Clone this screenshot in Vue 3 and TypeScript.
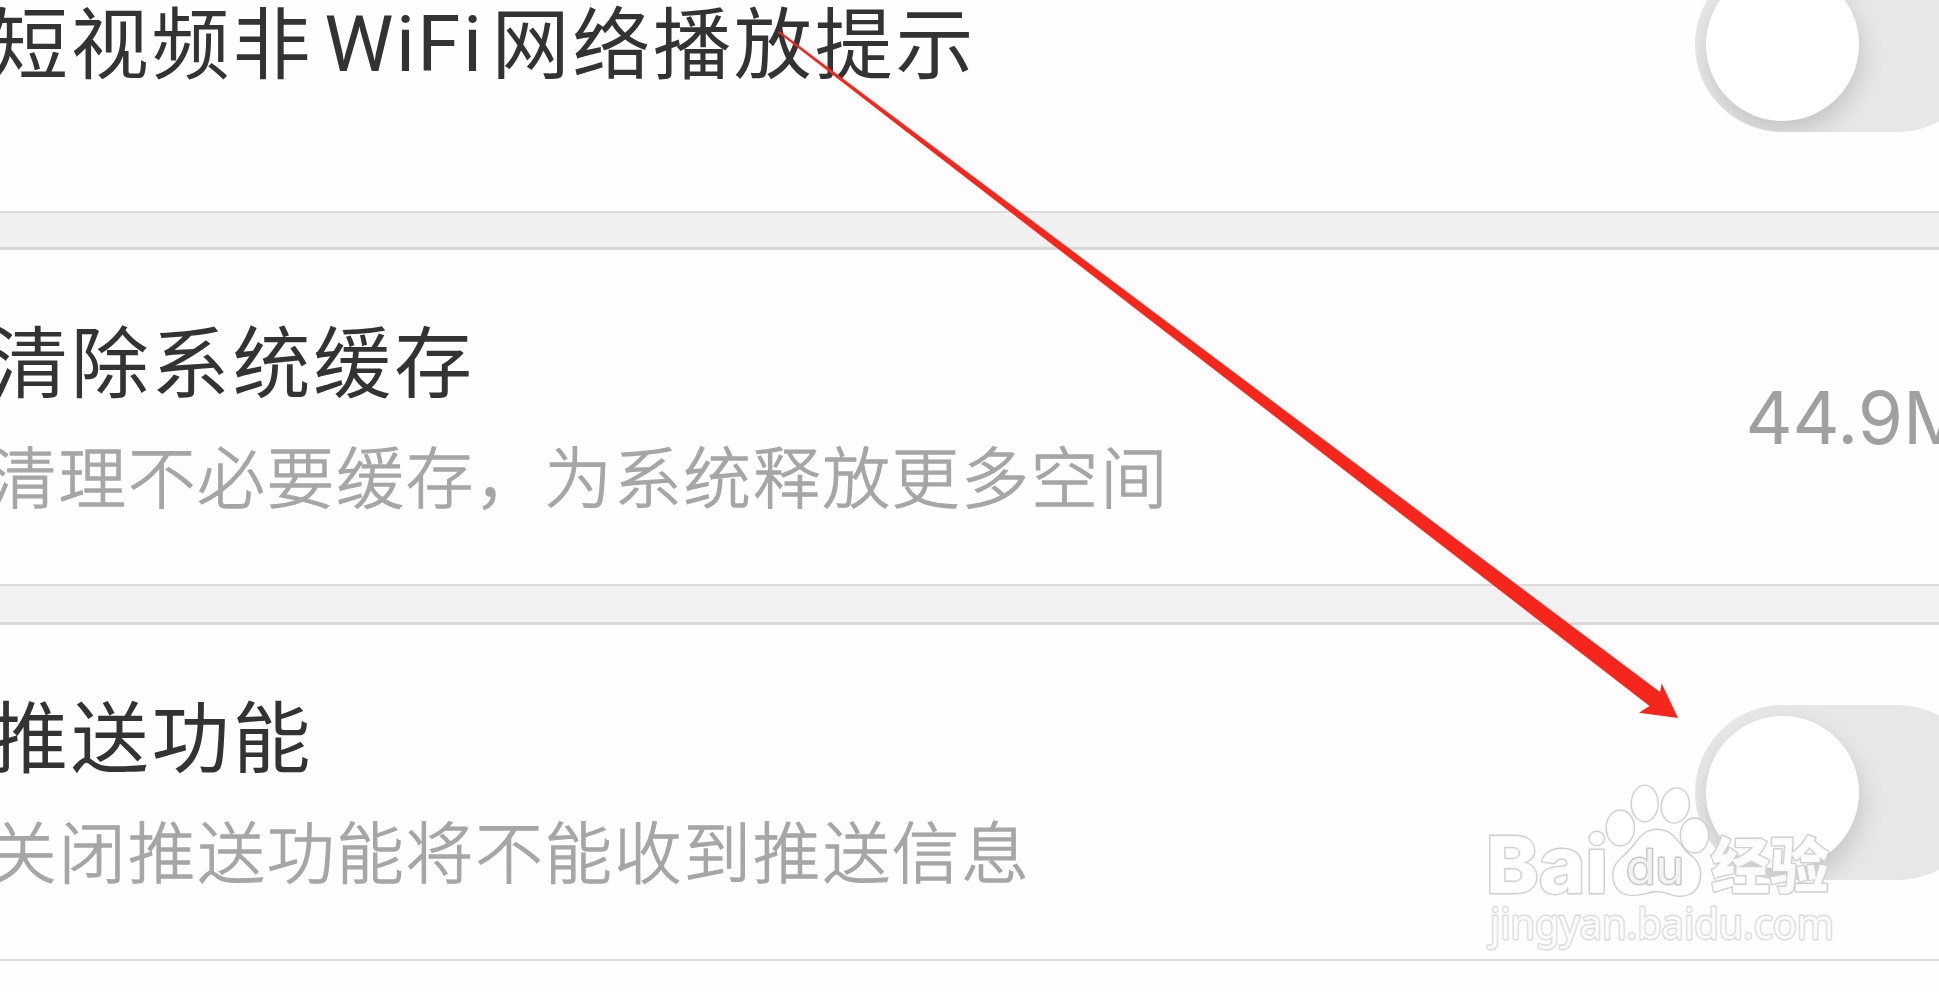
<script setup lang="ts">
interface SettingRow {
  id: string
  title: string[]
  subtitle?: string
  value?: string
  toggle?: boolean
}

const rows: SettingRow[] = [
  { id: 'wifi', title: ['短视频非', 'WiFi', '网络播放提示'], toggle: true },
  { id: 'cache', title: ['清除系统缓存'], subtitle: '清理不必要缓存，为系统释放更多空间', value: '44.9M' },
  { id: 'push', title: ['推送功能'], subtitle: '关闭推送功能将不能收到推送信息', toggle: true },
]
</script>

<template>
  <main class="screen">
    <section v-for="row in rows" :key="row.id" class="row" :class="row.id">
      <div class="copy">
        <h2 class="title">
          <span v-for="(part, i) in row.title" :key="i" :class="{ latin: i === 1 }">{{ part }}</span>
        </h2>
        <p v-if="row.subtitle" class="subtitle">{{ row.subtitle }}</p>
      </div>
      <span v-if="row.value" class="value">{{ row.value }}</span>
      <div v-if="row.toggle" class="toggle" role="switch" aria-checked="false">
        <div class="knob"></div>
      </div>
    </section>

    <svg class="overlay" width="1939" height="992" viewBox="0 0 1939 992">
      <path class="arrow" d="M778 32.5 L779.5 31 L1660 692 L1661.7 683.5 L1678 718 L1639 712.8 L1649.5 706 Z" />
      <g class="mark">
        <text class="bai" x="1486" y="893" textLength="122" lengthAdjust="spacingAndGlyphs">Bai</text>
        <ellipse cx="1620.3" cy="828" rx="13.5" ry="17.3" />
        <ellipse cx="1644.7" cy="803.5" rx="12.8" ry="17.7" />
        <ellipse cx="1675.3" cy="805.5" rx="13.3" ry="17" transform="rotate(12 1675.3 805.5)" />
        <ellipse cx="1694.5" cy="835.5" rx="13.5" ry="16.8" />
        <path d="M1657 830 C1676 830 1678 847 1692 857 C1705 868 1701 889 1689 894 C1675 899 1669 891 1657 891 C1646 891 1640 897 1626 894 C1611 889 1609 868 1622 858 C1637 847 1639 830 1657 830 Z" />
        <text class="du" x="1626" y="884" textLength="58" lengthAdjust="spacingAndGlyphs">du</text>
        <text class="cjk" x="1711" y="888" textLength="118" lengthAdjust="spacingAndGlyphs">经验</text>
        <text class="site" x="1490" y="939" textLength="344" lengthAdjust="spacingAndGlyphs">jingyan.baidu.com</text>
      </g>
    </svg>
  </main>
</template>

<style>
body {
  margin: 0;
  overflow: hidden;
  background: #fefefe;
}
</style>

<style scoped>
.screen {
  position: relative;
  width: 1939px;
  height: 992px;
  overflow: hidden;
  background: #fefefe;
  font-family: "Noto Sans CJK SC", sans-serif;
}

.row {
  display: flex;
  box-sizing: border-box;
  justify-content: space-between;
  white-space: nowrap;
  border-bottom: 2px solid #dcdcdc;
}

.wifi {
  height: 213px;
}

.cache,
.push {
  height: 339px;
  border-top: 3px solid #d8d8d8;
}

.cache {
  margin-top: 34px;
  box-shadow: 0 -34px #f0f0f0, 0 36px #f1f1f1;
}

.push {
  margin-top: 36px;
}

.copy {
  display: flex;
  flex-direction: column;
}

.title,
.subtitle {
  margin: 0;
  font-weight: 400;
}

.title {
  display: flex;
  margin-left: -10px;
  font-size: 78px;
  line-height: 100px;
  letter-spacing: 2.8px;
  color: #333;
}

.wifi .title {
  margin-top: -11px;
}

.cache .title,
.push .title {
  margin-top: 58px;
}

.latin {
  margin: 0 7px 0 11px;
  padding-top: 6px;
  font-family: Roboto, sans-serif;
  letter-spacing: 2.5px;
}

.subtitle {
  margin-top: 22px;
  margin-left: -11px;
  font-size: 67.5px;
  font-weight: 300;
  line-height: 88px;
  letter-spacing: 1.95px;
  color: #a6a6a6;
  -webkit-text-stroke: 1.3px #a6a6a6;
}

.value {
  margin-top: 123px;
  margin-right: -30px;
  font-family: Inter, sans-serif;
  font-size: 73px;
  line-height: 90px;
  color: #a0a0a0;
}

.toggle {
  flex: none;
  box-sizing: border-box;
  width: 290px;
  height: 175px;
  margin-right: -45.5px;
  padding: 11px;
  overflow: hidden;
  border-radius: 88px;
  background: #e7e7e7;
}

.wifi .toggle {
  margin-top: -43px;
}

.push .toggle {
  margin-top: 80px;
}

.knob {
  width: 153px;
  height: 153px;
  border-radius: 50%;
  background: #fff;
  box-shadow: 2px 12px 24px rgba(0, 0, 0, 0.15);
}

.overlay {
  position: absolute;
  inset: 0;
}

.arrow {
  fill: #f5261b;
}

.mark {
  fill: rgba(255, 255, 255, 0.88);
  stroke: #d0d0d0;
  stroke-width: 2.8;
  stroke-linejoin: round;
  paint-order: stroke;
}

.bai {
  font: 800 79px Inter, sans-serif;
}

.du {
  font: 400 48px Inter, sans-serif;
  fill: #f3f3f3;
  stroke: #c8c8c8;
  stroke-width: 3;
}

.cjk {
  font: 900 60px "Noto Sans CJK SC", sans-serif;
}

.site {
  font: 400 41px "Noto Sans", sans-serif;
  stroke: #dcdcdc;
}
</style>
